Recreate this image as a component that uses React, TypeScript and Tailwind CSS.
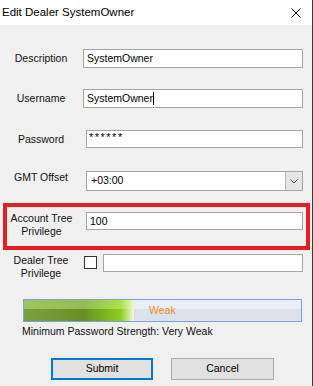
import React from 'react';

const font = { fontFamily: '"Liberation Sans", Arial, sans-serif' };

function TextBox({ value, className = '', cursor = false }: { value?: string; className?: string; cursor?: boolean }) {
    return (
        <div className={`flex items-center bg-white border border-[#a6a6a6] pl-[3px] text-[10.5px] text-black ${className}`}>
            <span className="leading-[13px] whitespace-nowrap">{value}</span>
            {cursor && <span className="w-px h-[13px] bg-black"></span>}
        </div>
    );
}

export default function App() {
    return (
        <div className="w-[313px] h-[386px] bg-[#f0f0f0] border-r border-[#3a3a3a] overflow-hidden" style={font}>
            {/* Title bar */}
            <div className="h-[25px] bg-white flex items-center justify-between pl-[2px] pr-[11px]">
                <span className="text-[11.5px] text-black leading-none">Edit Dealer SystemOwner</span>
                <svg width="10" height="10" viewBox="0 0 10 10" className="block">
                    <path d="M0.5 0.5 L9.5 9.5 M9.5 0.5 L0.5 9.5" stroke="#111" strokeWidth="1" fill="none" />
                </svg>
            </div>

            {/* Description */}
            <div className="flex items-center mt-[24px] h-[19px]">
                <div className="w-[82px] text-center text-[10.5px] text-[#111] leading-[13px]">Description</div>
                <TextBox value="SystemOwner" className="ml-[1px] w-[220px] h-[19px]" />
            </div>

            {/* Username */}
            <div className="flex items-center mt-[21px] h-[19px]">
                <div className="w-[82px] text-center text-[10.5px] text-[#111] leading-[13px]">Username</div>
                <TextBox value="SystemOwner" cursor className="ml-[1px] w-[220px] h-[19px]" />
            </div>

            {/* Password */}
            <div className="flex items-center mt-[22px] h-[18px]">
                <div className="w-[82px] text-center text-[10.5px] text-[#111] leading-[13px]">Password</div>
                <div className="ml-[4px] w-[217px] h-[18px] bg-white border border-[#a6a6a6] pl-[2px] flex items-start">
                    <span className="text-[11px] leading-[12px] tracking-[1.5px] text-black">******</span>
                </div>
            </div>

            {/* GMT Offset */}
            <div className="flex items-start mt-[23px] h-[20px]">
                <div className="w-[82px] text-center text-[10.5px] text-[#111] leading-[13px]">GMT Offset</div>
                <div className="ml-[4px] w-[217px] h-[20px] bg-white border border-[#a6a6a6] flex">
                    <div className="flex-1 flex items-center pl-[4px] text-[10.5px] text-black">+03:00</div>
                    <div className="w-[17px] h-full bg-[#e5e5e5] border-l border-[#b4b4b4] flex items-center justify-center">
                        <svg width="8" height="5" viewBox="0 0 8 5" className="block">
                            <path d="M0.5 0.5 L4 4 L7.5 0.5" stroke="#555" strokeWidth="1" fill="none" />
                        </svg>
                    </div>
                </div>
            </div>

            {/* Account Tree Privilege (highlighted) */}
            <div className="mt-[12px] ml-[3px] w-[307px] h-[47px] border-4 border-[#e81c25] flex items-start pt-[5px]">
                <div className="w-[69px] text-center text-[10.5px] text-[#111] leading-[13px]">
                    Account Tree<br />Privilege
                </div>
                <TextBox value="100" className="ml-[10px] w-[217px] h-[18px]" />
            </div>

            {/* Dealer Tree Privilege */}
            <div className="flex items-start mt-[4px] h-[26px]">
                <div className="w-[82px] text-center text-[10.5px] text-[#111] leading-[13px]">
                    Dealer Tree<br />Privilege
                </div>
                <div className="ml-[2px] mt-[2px] w-[13px] h-[13px] bg-white border border-[#333]"></div>
                <TextBox className="ml-[6px] w-[200px] h-[18px]" />
            </div>

            {/* Strength bar */}
            <div className="mt-[19px] ml-[23px] w-[279px] h-[23px] border border-[#7f9fd6] flex bg-[linear-gradient(to_bottom,#eaeef6_0%,#eaeef6_45%,#dce1ec_45%,#dce1ec_100%)]">
                <div className="w-[110px] h-full bg-[linear-gradient(to_bottom,rgba(220,255,160,0.38)_0%,rgba(220,255,160,0.38)_45%,rgba(255,255,255,0)_45%),linear-gradient(to_right,#7aa03a_0%,#6a9024_55%,#7db81c_75%,#8fcf1c_88%,#d8eeb0_97%,#f4fbe6_100%)]"></div>
                <div className="flex items-center pl-[15px] text-[10.5px] text-[#f28a1d]">Weak</div>
            </div>
            <div className="mt-[3px] ml-[22px] text-[10.5px] leading-[13px] text-[#111]">
                Minimum Password Strength: Very Weak
            </div>

            {/* Buttons */}
            <div className="flex mt-[20px] ml-[51px] gap-[18px]">
                <button className="w-[102px] h-[22px] bg-[#e1e1e1] border-2 border-[#0078d7] text-[10.5px] text-black flex items-center justify-center">
                    Submit
                </button>
                <button className="w-[103px] h-[22px] bg-[#e1e1e1] border border-[#adadad] text-[10.5px] text-black flex items-center justify-center">
                    Cancel
                </button>
            </div>
        </div>
    );
}
